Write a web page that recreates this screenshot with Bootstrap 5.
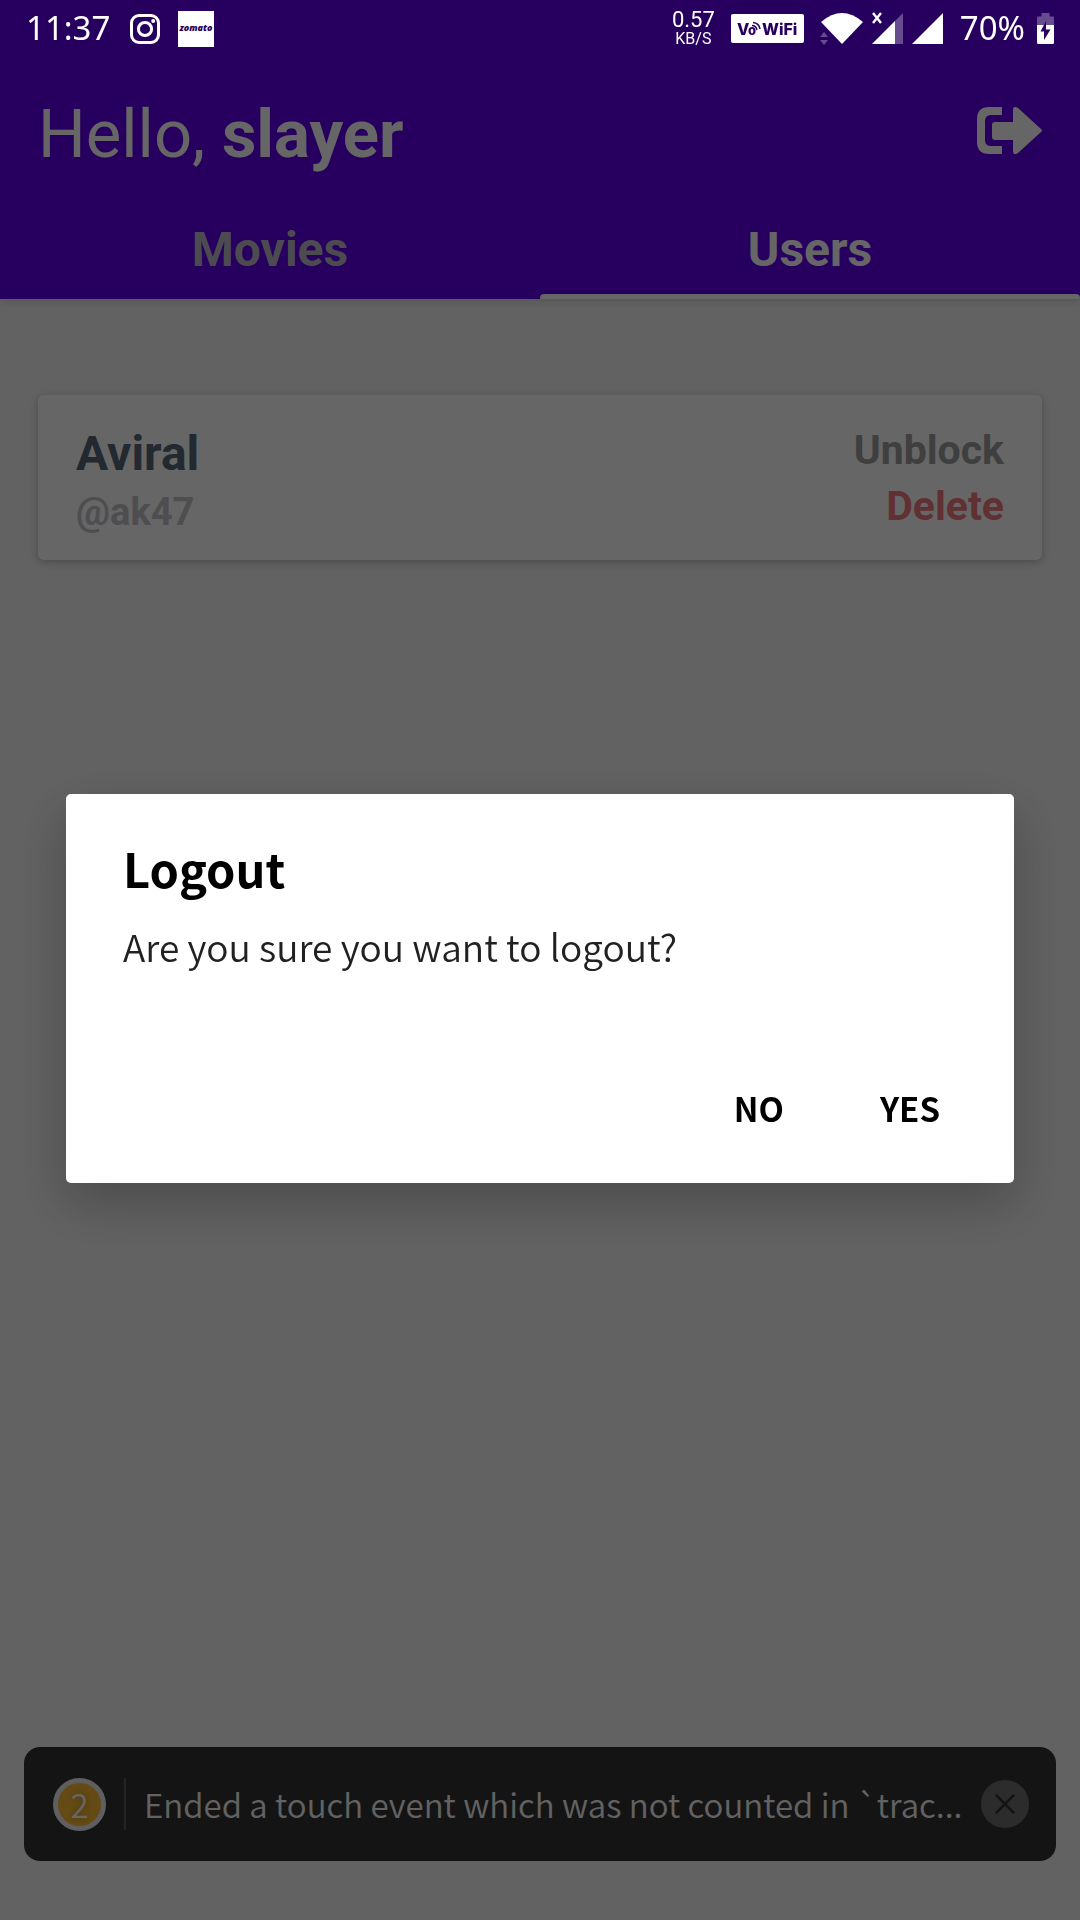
<!DOCTYPE html>
<html lang="en">
<head>
<meta charset="utf-8">
<meta name="viewport" content="width=device-width, initial-scale=1">
<title>Users</title>
<link href="https://cdn.jsdelivr.net/npm/bootstrap@5.3.0/dist/css/bootstrap.min.css" rel="stylesheet">
<style>
  :root { --status-h: 57px; --edge: 38px; --slate: "Noto Sans CJK SC", "Noto Sans", sans-serif; }
  body { font-family: Roboto, sans-serif; background: #f5f5f5; }
  svg { display: block; flex: none; }

  /* system status bar, drawn over the dimmed page */
  .status-bar { height: var(--status-h); z-index: 1070; color: #fff; padding: 0 26px 0 26px; font: 400 33px/40px "Noto Sans", sans-serif; }
  .status-text { padding-bottom: 2px; }
  .status-icons { gap: 16px; }
  .battery-group { gap: 12px; }
  .net-speed { font: 400 22px/20px Roboto, sans-serif; }
  .net-unit { font-size: 16px; line-height: 17px; }
  .signal-group { gap: 8px; }

  .app-header { background: #6200ee; padding-top: calc(var(--status-h) + 37px); box-shadow: 0 2px 8px rgba(0,0,0,.14); }
  .header-row { padding: 0 var(--edge); }
  .greeting { font-size: 67px; line-height: 80px; font-weight: 400; }
  .tabs-row { margin-top: 28px; }
  .tabs-row .nav-link { font-size: 48px; line-height: 56px; font-weight: 700; color: #bfbfc8; padding: 20px 0 16px; border-bottom: 5px solid transparent; }
  .tabs-row .nav-link.active { color: #fff; position: relative; }
  .tabs-row .nav-link.active::after { content: ""; position: absolute; inset: auto 0 -5px; height: 5px; background: #fff; border-radius: 4px 4px 0 0; }

  .user-card { margin: 96px var(--edge) 0; padding: 27px var(--edge) 26px; border: 0; border-radius: 6px; box-shadow: 0 2px 8px rgba(0,0,0,.26); }
  .user-name { font-size: 48px; line-height: 56px; color: #57667a; margin-bottom: 8px; }
  .user-handle { font-size: 38px; line-height: 44px; color: #c2c2c8; }
  .user-action { font-size: 41px; line-height: 56px; color: #9e9e9e; }
  .user-action.remove { color: #ef7880; }

  .warn-toast { margin: 0 24px 59px; height: 114px; padding: 0 27px 0 29px; background: #323232; color: #f5f5f5; border-radius: 16px; font: 350 33px/48px var(--slate); }
  .warn-count { width: 53px; height: 53px; border: 5px solid #eee; border-radius: 50%; background: #fab932; color: #fff; text-shadow: 0 0 6px rgba(0,0,0,.3); }
  .warn-rule { width: 2px; height: 52px; margin: 0 18px; background: #5a5a5a; }
  .warn-close { width: 48px; height: 48px; border-radius: 50%; background: #6f6f6f; }

  .modal-backdrop { --bs-backdrop-opacity: .6; }
  .logout-modal { padding-top: var(--status-h); }
  .logout-modal .modal-dialog { max-width: none; margin: 0 66px; min-height: 100%; }
  .logout-modal .modal-content { border: 0; border-radius: 5px; font-family: var(--slate); color: #000; box-shadow: 0 20px 52px rgba(0,0,0,.25); }
  .logout-modal .modal-body { padding: 46px 57px 0; }
  .logout-title { font-size: 47px; line-height: 56px; font-weight: 700; margin-bottom: 26px; }
  .logout-text { font-size: 37px; line-height: 48px; font-weight: 350; color: #212121; }
  .logout-modal .modal-footer { padding: 114px 42px 51px; gap: 32px; }
  .dialog-btn, .dialog-btn:hover { font: 700 33px/48px var(--slate); padding: 0 32px; color: #000; }
</style>
</head>
<body>
<div class="status-bar fixed-top d-flex justify-content-between align-items-center">
  <div class="status-icons d-flex align-items-center">
    <span class="status-text">11:37</span>
    <svg width="36" height="34" viewBox="-4 -2 36 34" fill="none" stroke="#fff" stroke-width="3" aria-label="Instagram"><rect x="1.5" y="1.5" width="27" height="27" rx="7.5"/><circle cx="15" cy="15" r="6.6"/><circle cx="23.2" cy="7" r="2" fill="#fff" stroke="none"/></svg>
    <svg width="36" height="36" viewBox="0 0 36 36"><rect width="36" height="36" fill="#fff"/><text x="18" y="20" text-anchor="middle" font-family="Open Sans, sans-serif" font-size="9" font-weight="800" font-style="italic" fill="#27005f">zomato</text></svg>
  </div>
  <div class="status-icons d-flex align-items-center">
    <div class="net-speed text-center"><div>0.57</div><div class="net-unit">KB/S</div></div>
    <svg width="73" height="29" viewBox="0 0 73 29"><rect width="73" height="29" rx="2" fill="#fff"/><g fill="#27005f" font-family="Inter, sans-serif" font-weight="800"><text x="6" y="21" font-size="16">V</text><text x="17" y="21" font-size="13">o</text><text x="31" y="21" font-size="16">WiFi</text></g><g fill="none" stroke="#27005f" stroke-width="1.5"><path d="M21 11.5q4 0 5 4.500M22 8.500q6 .5 7 6.500"/></g></svg>
    <div class="signal-group d-flex align-items-center">
      <svg width="44" height="33" viewBox="0 0 44 33"><path d="M1 10Q22-8 43 10L22 32z" fill="#fff"/><path d="M0 25l4-5 4 5zM0 28h8l-4 5z" fill="#684c90"/></svg>
      <svg width="32" height="33" viewBox="0 0 32 33"><path d="M0 32L31 1V32z" fill="#684c90"/><path d="M0 32L23 9V32z" fill="#fff"/><path d="M1 1l8 10M9 1L1 11" stroke="#fff" stroke-width="2.400"/></svg>
      <svg width="32" height="33" viewBox="0 0 32 33"><path d="M0 32L31 1V32z" fill="#fff"/></svg>
    </div>
    <div class="battery-group d-flex align-items-center">
      <span class="status-text">70%</span>
      <svg width="17" height="31" viewBox="0 0 17 31"><path d="M4.500 0h8v3.500H16q1 0 1 1V14H0V4.500q0-1 1-1h3.500z" fill="#684c90"/><path d="M0 12h17v17.500q0 1.500-1.500 1.500h-14Q0 31 0 29.500z" fill="#fff"/><path d="M9 8v8.500h4.500L7 27v-8.500H3.500z" fill="#27005f"/></svg>
    </div>
  </div>
</div>

<div class="d-flex flex-column min-vh-100">
  <header class="app-header text-white">
    <div class="header-row d-flex justify-content-between align-items-center">
      <h1 class="greeting m-0">Hello, <b>slayer</b></h1>
      <button type="button" class="btn border-0 p-0 pb-2" aria-label="Log out">
        <svg width="65" height="47" viewBox="0 0 65 47" fill="#fff"><path d="M25 0v8H14q-6 0-6 6v19q0 6 6 6h11v8H12Q0 47 0 35V12Q0 0 12 0z"/><path d="M18 15h18V3q0-5 5-2l23 21q2 1.500 0 3L41 46q-5 3-5-2V33H18q-3 0-3-3V18q0-3 3-3z"/></svg>
      </button>
    </div>
    <nav class="tabs-row nav nav-justified">
      <a class="nav-link" href="#movies">Movies</a>
      <a class="nav-link active" href="#users" aria-current="page">Users</a>
    </nav>
  </header>

  <main>
    <div class="card user-card flex-row justify-content-between align-items-end">
      <div class="fw-bold">
        <div class="user-name">Aviral</div>
        <div class="user-handle">@ak47</div>
      </div>
      <div class="d-flex flex-column align-items-end">
        <button type="button" class="btn border-0 p-0 fw-bold user-action">Unblock</button>
        <button type="button" class="btn border-0 p-0 fw-bold user-action remove">Delete</button>
      </div>
    </div>
  </main>

  <div class="warn-toast mt-auto d-flex align-items-center">
    <div class="warn-count flex-shrink-0 d-flex align-items-center justify-content-center">2</div>
    <div class="warn-rule flex-shrink-0"></div>
    <div class="flex-grow-1 text-nowrap">Ended a touch event which was not counted in `trac...</div>
    <button type="button" class="btn border-0 p-0 warn-close flex-shrink-0 d-flex align-items-center justify-content-center" aria-label="Dismiss">
      <svg width="20" height="20" viewBox="0 0 20 20" stroke="#323232" stroke-width="2.500" stroke-linecap="round"><path d="M1.500 1.500l17 17M18.500 1.500l-17 17"/></svg>
    </button>
  </div>
</div>

<div class="modal-backdrop show"></div>
<div class="modal logout-modal d-block" tabindex="-1" role="dialog" aria-modal="true" aria-labelledby="logoutTitle">
  <div class="modal-dialog modal-dialog-centered">
    <div class="modal-content">
      <div class="modal-body">
        <h2 class="logout-title" id="logoutTitle">Logout</h2>
        <p class="logout-text m-0">Are you sure you want to logout?</p>
      </div>
      <div class="modal-footer border-0">
        <button type="button" class="btn border-0 m-0 dialog-btn">NO</button>
        <button type="button" class="btn border-0 m-0 dialog-btn">YES</button>
      </div>
    </div>
  </div>
</div>
<script src="https://cdn.jsdelivr.net/npm/bootstrap@5.3.0/dist/js/bootstrap.bundle.min.js"></script>
</body>
</html>
